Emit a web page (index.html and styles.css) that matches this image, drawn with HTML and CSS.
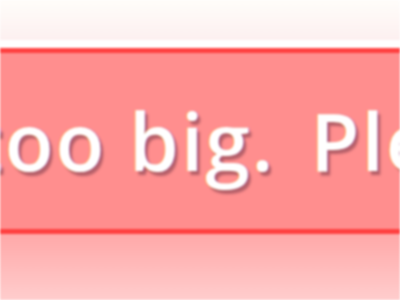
FILE: index.html
```html
<!DOCTYPE html>
<html>
<head>
<meta charset="utf-8">
<link rel="stylesheet" href="styles.css">
</head>
<body>
<div class="page">
  <div class="header"></div>
  <div class="gap"></div>
  <div class="alert">
    <p class="alert-text">too big. <span class="alert-next">Please upload a smaller file.</span></p>
  </div>
  <div class="below"></div>
</div>
</body>
</html>
```
FILE: styles.css
```css
html, body {
  margin: 0;
  padding: 0;
  width: 400px;
  height: 300px;
  overflow: hidden;
  background: #ffffff;
}
.page {
  display: flex;
  flex-direction: column;
  width: 400px;
  height: 300px;
  filter: blur(1.2px);
}
.header {
  height: 40px;
  background: linear-gradient(#fffdfa, #fdf0f0);
}
.gap {
  height: 8px;
  background: #ffffff;
}
.alert {
  height: 176px;
  border-top: 5px solid #ff4040;
  border-bottom: 5px solid #ff4040;
  background: #ff8e8e;
  overflow: hidden;
}
.alert-text {
  margin: 47px 0 0 0;
  font-family: "Open Sans", "DejaVu Sans", sans-serif;
  font-size: 80px;
  font-weight: 600;
  letter-spacing: 2px;
  line-height: 80px;
  color: #ffffff;
  white-space: nowrap;
  text-indent: -29px;
  text-shadow: -1px 0 1px rgba(255, 190, 40, 0.55), 1px 0 1px rgba(150, 90, 230, 0.45), 3px 4px 2px rgba(90, 40, 60, 0.45);
}
.alert-next {
  margin-left: 12px;
}
.below {
  flex: 1;
  background: linear-gradient(#ffa8a8, #ffcdcd);
}
```
